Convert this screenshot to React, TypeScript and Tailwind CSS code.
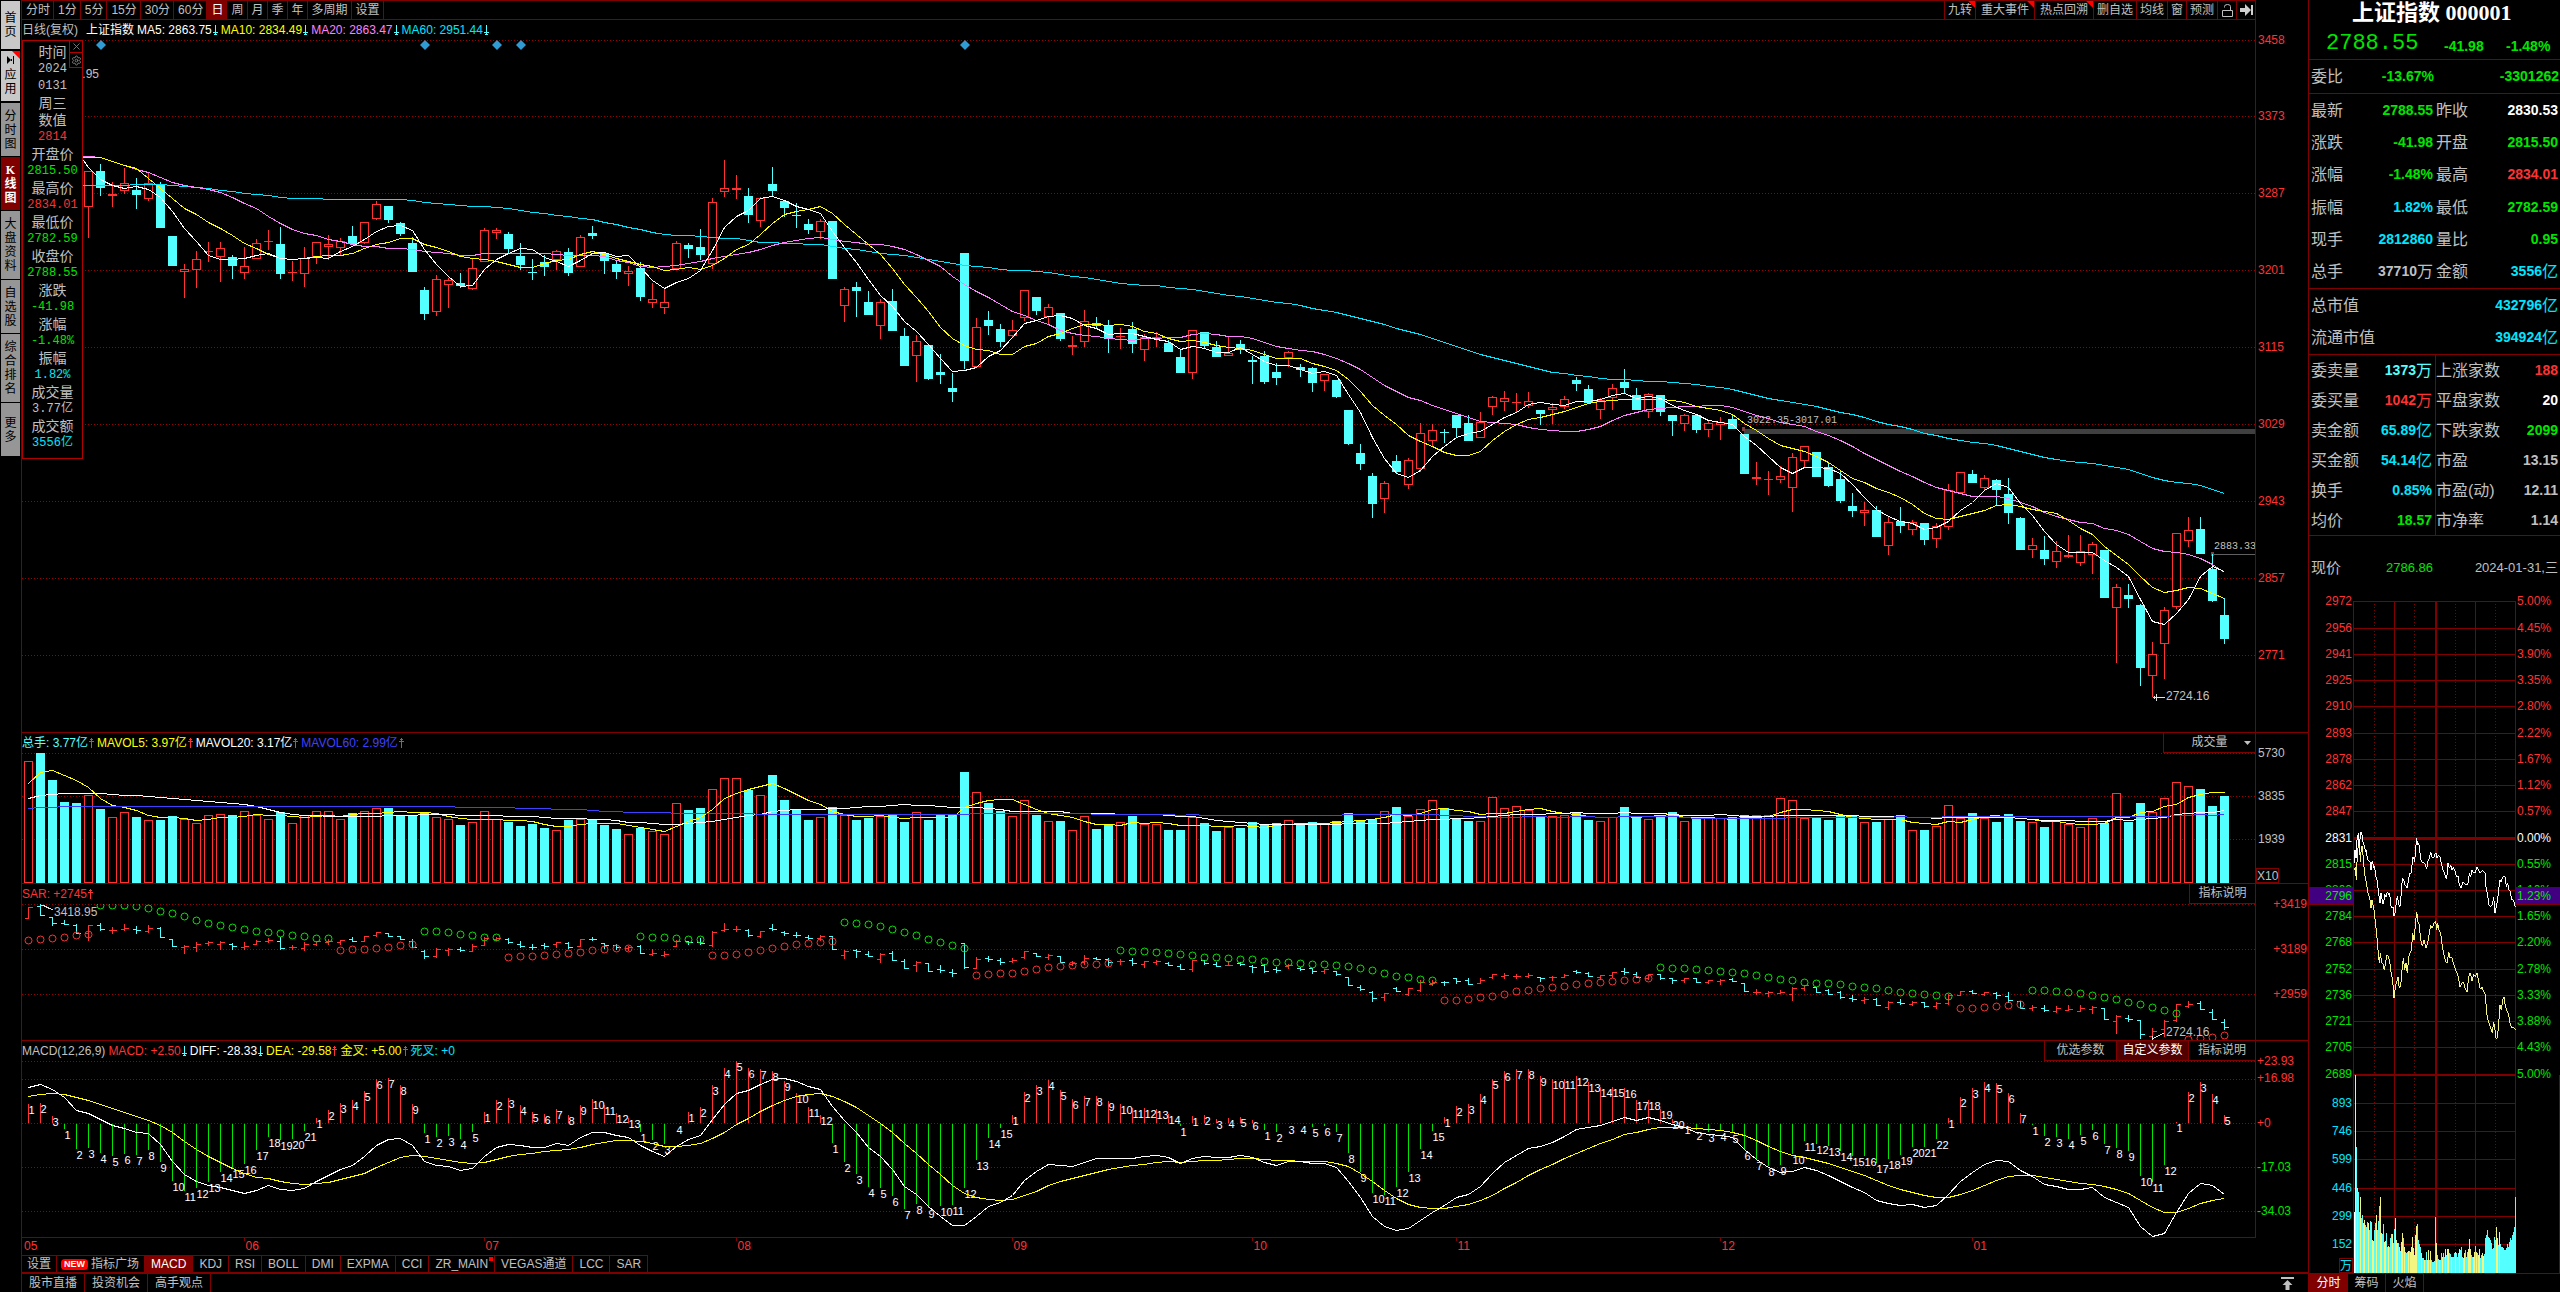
import React from "react";
import { Settings, X } from "lucide-react";

/* ---------- market data ---------- */

type Candle = [up: 0 | 1, high: number, top: number, bottom: number, low: number];

// Daily candles: direction, then high / body top / body bottom / low as screen levels.
const candles: Candle[] = [
  [1, 88, 88, 139, 139], [0, 75, 85, 126, 126], [0, 136, 136, 162, 169], [0, 147, 160, 168, 168], [0, 168, 172, 206, 206],
  [1, 171, 171, 207, 238], [0, 164, 171, 188, 196], [1, 182, 194, 196, 207], [1, 168, 183, 191, 194], [0, 178, 190, 195, 209],
  [1, 172, 183, 199, 201], [0, 182, 184, 228, 228], [0, 236, 236, 266, 266], [1, 264, 269, 272, 298], [1, 251, 259, 270, 288],
  [1, 242, 251, 252, 262], [1, 242, 248, 257, 282], [0, 255, 257, 266, 279], [1, 247, 266, 273, 279], [1, 239, 243, 259, 259],
  [1, 230, 241, 242, 250], [0, 227, 244, 274, 279], [1, 261, 272, 273, 281], [1, 247, 258, 274, 287], [1, 242, 242, 257, 264],
  [1, 235, 244, 247, 260], [1, 238, 241, 248, 256], [0, 226, 236, 244, 244], [1, 222, 222, 243, 244], [1, 201, 204, 219, 220],
  [0, 206, 206, 220, 223], [0, 222, 223, 234, 236], [0, 237, 243, 272, 272], [0, 287, 290, 314, 320], [1, 275, 279, 312, 316],
  [1, 278, 280, 285, 308], [0, 273, 283, 286, 288], [1, 258, 268, 289, 290], [1, 228, 230, 262, 262], [1, 228, 230, 233, 239],
  [0, 232, 234, 249, 253], [0, 243, 256, 265, 270], [0, 259, 272, 273, 280], [0, 255, 262, 267, 276], [1, 250, 251, 260, 270],
  [0, 248, 252, 273, 276], [1, 235, 237, 267, 267], [0, 226, 233, 236, 239], [0, 252, 253, 261, 274], [0, 260, 264, 272, 279],
  [1, 266, 271, 274, 286], [0, 262, 268, 297, 301], [1, 283, 299, 303, 308], [1, 288, 302, 308, 314], [1, 241, 243, 269, 269],
  [0, 243, 245, 249, 258], [0, 229, 247, 255, 260], [1, 198, 202, 264, 269], [1, 160, 188, 192, 197], [1, 175, 188, 190, 199],
  [0, 188, 196, 215, 223], [1, 197, 198, 221, 227], [0, 167, 184, 191, 196], [0, 200, 201, 208, 217], [0, 203, 215, 216, 228],
  [0, 219, 224, 230, 234], [1, 219, 221, 232, 239], [0, 221, 221, 279, 279], [1, 287, 289, 306, 322], [0, 282, 287, 291, 317],
  [0, 291, 302, 315, 315], [1, 299, 302, 326, 339], [0, 289, 301, 331, 331], [0, 328, 336, 366, 366], [1, 335, 341, 356, 382],
  [0, 345, 345, 379, 380], [0, 354, 372, 375, 384], [0, 373, 388, 392, 402], [0, 253, 253, 361, 369], [1, 318, 327, 367, 367],
  [0, 311, 320, 326, 335], [0, 324, 329, 342, 347], [1, 320, 330, 336, 338], [1, 290, 290, 318, 321], [0, 297, 297, 311, 315],
  [1, 304, 307, 317, 325], [0, 313, 313, 339, 341], [1, 336, 345, 347, 355], [1, 310, 321, 342, 347], [0, 317, 323, 326, 328],
  [0, 320, 325, 339, 353], [1, 328, 336, 337, 349], [0, 322, 329, 344, 353], [1, 334, 337, 350, 361], [1, 332, 337, 338, 347],
  [0, 340, 343, 352, 352], [0, 349, 357, 373, 373], [1, 330, 330, 373, 379], [0, 332, 332, 346, 349], [0, 341, 347, 357, 357],
  [1, 336, 353, 356, 356], [0, 340, 344, 350, 354], [0, 356, 360, 362, 384], [0, 351, 356, 382, 384], [0, 363, 372, 378, 385],
  [1, 351, 352, 358, 367], [0, 364, 367, 370, 377], [0, 367, 368, 383, 392], [1, 374, 374, 381, 391], [0, 380, 380, 397, 398],
  [0, 410, 410, 444, 445], [0, 444, 453, 464, 470], [0, 473, 476, 504, 518], [1, 481, 483, 499, 513], [0, 455, 461, 472, 474],
  [1, 458, 460, 485, 489], [1, 423, 433, 469, 472], [1, 424, 430, 441, 446], [0, 429, 432, 433, 443], [0, 415, 415, 428, 438],
  [0, 415, 423, 441, 441], [1, 412, 422, 438, 438], [1, 396, 397, 407, 415], [1, 391, 398, 402, 411], [1, 393, 402, 403, 412],
  [1, 392, 401, 406, 408], [0, 410, 410, 414, 425], [1, 403, 407, 410, 424], [1, 396, 399, 407, 409], [0, 377, 380, 384, 391],
  [0, 385, 389, 403, 403], [1, 398, 400, 410, 419], [1, 384, 388, 398, 410], [0, 369, 382, 388, 393], [0, 388, 395, 410, 410],
  [1, 393, 394, 412, 418], [0, 395, 395, 412, 416], [0, 415, 415, 421, 436], [1, 414, 415, 424, 431], [0, 415, 415, 430, 433],
  [1, 420, 423, 430, 437], [1, 417, 422, 425, 440], [0, 415, 419, 429, 429], [0, 434, 434, 474, 474], [1, 462, 477, 479, 485],
  [1, 471, 479, 480, 495], [1, 466, 476, 480, 483], [1, 453, 457, 488, 512], [1, 446, 446, 461, 468], [0, 452, 452, 477, 477],
  [0, 462, 467, 486, 487], [0, 471, 479, 501, 503], [0, 493, 506, 511, 517], [1, 502, 510, 513, 526], [0, 506, 510, 537, 537],
  [1, 517, 522, 546, 555], [0, 507, 521, 526, 533], [1, 520, 522, 530, 535], [0, 523, 523, 540, 545], [1, 523, 526, 539, 548],
  [1, 484, 490, 527, 530], [1, 472, 472, 493, 493], [0, 470, 474, 483, 483], [1, 475, 478, 488, 491], [0, 479, 480, 490, 505],
  [0, 478, 494, 513, 524], [0, 517, 518, 550, 550], [1, 538, 545, 550, 558], [0, 536, 550, 559, 565], [1, 541, 551, 562, 568],
  [1, 535, 555, 557, 558], [1, 535, 551, 563, 566], [1, 542, 544, 555, 574], [0, 550, 550, 598, 598], [1, 584, 587, 608, 663],
  [0, 584, 595, 599, 608], [0, 604, 605, 668, 686], [1, 642, 654, 676, 697], [1, 607, 610, 644, 679], [1, 533, 533, 607, 609],
  [1, 517, 530, 541, 547], [0, 517, 529, 554, 554], [0, 554, 569, 601, 602], [0, 598, 615, 639, 644],
];

const volumes = [
  87, 64, 140, 201, 204, 180, 220, 244, 230, 243, 252, 251, 240, 248, 260, 238, 233, 237, 227, 238, 249, 229, 260, 238, 227, 227, 247, 232,
  227, 219, 217, 237, 237, 229, 244, 249, 265, 258, 227, 249, 257, 268, 262, 273, 280, 251, 249, 250, 265, 276, 289, 273, 283, 289, 205, 223,
  218, 166, 135, 135, 167, 182, 126, 195, 223, 251, 244, 215, 237, 251, 246, 240, 238, 257, 230, 251, 238, 238, 117, 174, 204, 226, 241, 194,
  237, 255, 254, 280, 241, 276, 264, 258, 240, 261, 263, 279, 279, 244, 259, 282, 272, 273, 257, 265, 259, 252, 265, 257, 261, 254, 232, 251,
  249, 227, 215, 240, 221, 196, 219, 246, 254, 255, 188, 219, 213, 222, 241, 240, 238, 229, 251, 255, 244, 215, 242, 249, 238, 229, 255, 247,
  246, 246, 243, 237, 238, 238, 191, 196, 245, 245, 251, 238, 240, 258, 257, 248, 238, 280, 279, 269, 210, 246, 232, 245, 257, 234, 254, 258,
  271, 254, 263, 272, 245, 259, 177, 257, 204, 230, 191, 146, 157, 165, 212, 184,
];

const macdBars = [
  53, 56, 20, -16, -72, -68, -83, -93, -85, -89, -74, -108, -160, -188, -182, -163, -135, -125, -113, -74, -38, -46, -44, -22, 14, 37, 56, 65,
  90, 122, 126, 107, 53, -27, -38, -36, -43, -25, 31, 66, 70, 51, 31, 26, 40, 23, 51, 67, 51, 28, 15, -24, -46, -58, -2, 31, 45, 107, 154, 173,
  154, 150, 145, 119, 84, 45, 23, -55, -107, -141, -177, -180, -202, -239, -225, -236, -230, -228, -180, -102, -40, -13, 23, 87, 107, 120, 93,
  67, 76, 76, 61, 53, 42, 41, 39, 25, -7, 19, 23, 13, 14, 17, 8, -18, -26, -2, -2, -11, -9, -26, -83, -135, -195, -200, -177, -135, -71, -21,
  17, 48, 53, 80, 122, 146, 151, 150, 132, 124, 123, 132, 115, 102, 101, 97, 66, 65, 39, 13, -2, -20, -24, -23, -28, -75, -103, -120, -117,
  -87, -51, -57, -65, -79, -91, -91, -110, -99, -88, -67, -66, -44, 14, 74, 99, 116, 112, 84, 28, -4, -36, -39, -43, -34, -18, -59, -68, -77,
  -147, -163, -117, 3, 87, 115, 80, 23,
];

// Parabolic SAR runs: trend flag followed by the levels of consecutive days.
const sarRuns: [0 | 1, number[]][] = [
  [1, [586, 583, 581, 578, 573, 569]],
  [0, [488, 488, 489, 491, 496, 505, 511, 519, 530, 538, 544, 549, 554, 560, 564, 566, 572, 575, 580, 580]],
  [1, [614, 611, 611, 608, 605, 600, 597]],
  [0, [561, 561, 563, 570, 572, 577, 577]],
  [1, [632, 630, 630, 627, 624, 622, 619, 613, 611, 608, 608]],
  [0, [575, 577, 577, 580, 583, 583]],
  [1, [628, 628, 625, 619, 614, 608, 603, 597, 594, 591, 588]],
  [0, [535, 538, 541, 547, 555, 563, 572, 583, 591, 600, 608]],
  [1, [683, 680, 677, 677, 672, 666, 661, 658, 656, 653, 653, 650]],
  [0, [613, 616, 616, 619, 622, 625, 628, 633, 633, 636, 638, 638, 644, 647, 647, 650, 652, 652, 656, 658, 663, 669, 678, 686, 689, 694, 697]],
  [1, [753, 753, 750, 745, 742, 736, 728, 725, 720, 717, 714, 709, 706, 703, 700, 697, 695, 691]],
  [0, [661, 663, 663, 666, 669, 672, 675, 678, 683, 689, 694, 697, 703, 706, 706, 709, 714, 716, 720, 725, 731, 734, 737, 739, 742]],
  [1, [775, 775, 772, 770, 767, 765]],
  [0, [725, 725, 728, 731, 733, 739, 745, 750, 759, 765, 773, 781, 790]],
  [1, [862, 860, 856, 851]],
];

const RED = "#ff3232";
const CYAN = "#54ffff";
const GREEN = "#00e600";
const GRID = "#9a0000";
const FRAME = "#800000";

/* ---------- chart geometry ---------- */

const dayX = (i: number) => 6.5 + 12 * i;
const level = (v: number) => v * 0.3584;
const priceY = (p: number) => p - 40;
const volumeY = (v: number) => Math.round(level(v) - 23);
const sarY = (v: number) => Math.round(level(v) - 174) + 0.5;
const sarFromPrice = (p: number) => Math.round((p - 75.4) / 4.564) + 0.5;
const macdY = (v: number) => level(v) - 331;

type Knot = [index: number, value: number];

function interpolate(knots: Knot[], i: number) {
  for (let k = 1; k < knots.length; k++) {
    const [x0, y0] = knots[k - 1];
    const [x1, y1] = knots[k];
    if (i <= x1) return y0 + ((y1 - y0) * (i - x0)) / (x1 - x0);
  }
  return knots[knots.length - 1][1];
}

// Moving average; the days before the window fills come from the given knots.
function average(values: number[], span: number, warmup: Knot[]) {
  const from = Math.max(span - 1, warmup[warmup.length - 1][0] + 1);
  return values.map((_, i) =>
    i < from ? interpolate(warmup, i) : values.slice(i - span + 1, i + 1).reduce((a, b) => a + b, 0) / span,
  );
}

const toPoints = (values: number[], y: (v: number) => number) => values.map((v, i) => `${dayX(i)},${Math.round(y(v)) + 0.5}`).join(" ");

const closes = candles.map(([up, , top, bottom]) => (up ? top : bottom));
const ma5 = average(closes, 5, [[0, 100], [3, 150]]);
const ma10 = average(closes, 10, [[0, 150], [5, 157], [6, 157], [7, 161], [8, 165]]);
const ma20 = average(closes, 20, [[0, 150], [5, 156], [6, 157], [9, 169], [10, 172], [12, 182], [13, 185], [15, 189], [16, 192], [17, 197], [18, 203]]);
const ma60 = average(closes, 60, [
  [0, 187], [5, 185], [11, 184], [15, 188], [19, 194], [22, 198], [27, 199], [31, 199], [35, 204], [40, 208], [44, 215], [47, 219], [53, 234], [55, 235], [58, 238],
]);
const vol5 = average(volumes, 5, [[0, 147], [1, 118], [2, 113], [3, 125]]);
const vol20 = average(volumes, 20, [[0, 190], [1, 182], [2, 178], [5, 175], [8, 180], [11, 186], [14, 195], [18, 206]]);
const vol60 = average(volumes, 60, [[0, 218], [2, 214], [5, 211], [17, 211], [20, 213], [24, 211], [33, 213], [38, 214], [45, 220], [50, 229], [58, 232]]);

const deaKnots: Knot[] = [
  [0, 1022], [25, 1260], [37, 1209], [53, 1160], [66, 1014], [81, 1311], [102, 1195], [117, 1335], [137, 1107], [160, 1303], [167, 1243], [179, 1346], [183, 1307],
];
const deaRaw = macdBars.reduce<number[]>((acc, bar, i) => [...acc, i === 0 ? 1022 : acc[i - 1] - bar / 8], []);
const deaDrift = deaKnots.map(([i, v]): Knot => [i, v - deaRaw[i]]);
const dea = deaRaw.map((v, i) => v + interpolate(deaDrift, i));
const diff = dea.map((v, i) => v - macdBars[i] / 2);

const streaks = macdBars.reduce<number[]>((acc, bar, i) => {
  const same = i > 0 && bar > 0 === macdBars[i - 1] > 0;
  return [...acc, same ? acc[i - 1] + 1 : 1];
}, []);

/* ---------- small pieces ---------- */

function GridLines({ ys }: { ys: number[] }) {
  return (
    <g stroke={GRID} strokeDasharray="1 2">
      {ys.map((y) => (
        <line key={y} x1="0" x2="100%" y1={y} y2={y} />
      ))}
    </g>
  );
}

function Line({ values, y, color }: { values: number[]; y: (v: number) => number; color: string }) {
  return <polyline points={toPoints(values, y)} fill="none" stroke={color} />;
}

function AxisText({ x, y, color, end, children }: { x: number; y: number; color: string; end?: boolean; children: string }) {
  return (
    <text x={x} y={y + 4} fill={color} fontSize="12" textAnchor={end ? "end" : "start"}>
      {children}
    </text>
  );
}

function Arrow({ up }: { up?: boolean }) {
  return (
    <svg width="6" height="12" viewBox="0 0 6 12" className="inline-block shrink-0" shapeRendering="crispEdges">
      {up ? (
        <path d="M3.5 11V1M1 4.5h2M4 4.5h2M2 2.5h3" stroke={RED} fill="none" />
      ) : (
        <path d="M3.5 1v10M1 8.5h2M4 8.5h2M2 10.5h3" stroke={CYAN} fill="none" />
      )}
    </svg>
  );
}

function Legend({ color, trend, children }: { color: string; trend?: "up" | "down"; children: React.ReactNode }) {
  return (
    <span className="flex items-center" style={{ color }}>
      {children}
      {trend && <Arrow up={trend === "up"} />}
    </span>
  );
}

function Pane({ header, plot, axis }: { header: React.ReactNode; plot: React.ReactNode; axis: React.ReactNode }) {
  return (
    <section className="flex border-b border-[#800000]">
      <div className="min-w-0 flex-1 border-r border-[#800000]">
        <div className="flex h-5 items-center justify-between">{header}</div>
        {plot}
      </div>
      <div className="w-[52px] shrink-0">{axis}</div>
    </section>
  );
}

/* ---------- panes ---------- */

const priceLevels: [number, string][] = [
  [40, "3458"], [116, "3373"], [193, "3287"], [270, "3201"], [347, "3115"], [424, "3029"], [501, "2943"], [578, "2857"], [655, "2771"],
];

function PriceChart() {
  return (
    <svg className="block h-[692px] w-full" shapeRendering="crispEdges">
      <GridLines ys={priceLevels.map(([y]) => y - 39.5)} />
      <rect x="1722" y="389" width="100%" height="5" fill="#404040" />
      <line x1="2190" x2="100%" y1="514.5" y2="514.5" stroke="#606060" />
      <rect x="1720" y="387" width="3" height="4" fill="#804040" />
      <rect x="2189" y="512" width="3" height="4" fill="#804040" />
      {candles.map(([up, high, top, bottom, low], i) => {
        const x = dayX(i);
        if (!up) {
          return (
            <g key={i} fill={CYAN}>
              <rect x={x - 0.5} y={priceY(high)} width="1" height={low - high} />
              <rect x={x - 4.5} y={priceY(top)} width="9" height={bottom - top} />
            </g>
          );
        }
        return (
          <g key={i}>
            <path d={`M${x} ${priceY(high)}V${priceY(top)}M${x} ${priceY(bottom)}V${priceY(low)}`} stroke={RED} />
            {bottom - top > 2 ? (
              <rect x={x - 4} y={priceY(top) + 0.5} width="8" height={bottom - top - 1} fill="black" stroke={RED} />
            ) : (
              <rect x={x - 4.5} y={priceY(top)} width="9" height={bottom - top} fill={RED} />
            )}
          </g>
        );
      })}
      <Line values={ma60} y={priceY} color="#00e6ff" />
      <Line values={ma20} y={priceY} color="#ff80ff" />
      <Line values={ma10} y={priceY} color="#ffff00" />
      <Line values={ma5} y={priceY} color="#ffffff" />
      <g fill="#2f9bd2" shapeRendering="auto">
        {[79, 403, 475, 499, 943].map((x) => (
          <path key={x} d={`M${x} 0l5 5-5 5-5-5z`} />
        ))}
      </g>
      <g fill="#c0c0c0" fontSize="12">
        <text x="77" y="38" textAnchor="end">3418.95</text>
        <text x="2144" y="660">2724.16</text>
        <g className="font-['Liberation_Mono',monospace]" fontSize="10">
          <text x="1725" y="383">3022.35-3017.01</text>
          <text x="2192" y="509">2883.33</text>
        </g>
      </g>
      <path d="M2131 657.5h12M2132 656v3M2134 654v7" stroke="#e0e0e0" />
    </svg>
  );
}

function PriceAxis() {
  return (
    <svg className="block h-[712px] w-full">
      {priceLevels.map(([y, label]) => (
        <AxisText key={label} x={2} y={y - 20} color={RED}>
          {label}
        </AxisText>
      ))}
    </svg>
  );
}

function VolumeChart() {
  return (
    <svg className="block h-[130px] w-full" shapeRendering="crispEdges">
      <GridLines ys={[0.5, 43.5, 86.5]} />
      {volumes.map((v, i) => {
        const y = volumeY(v);
        return candles[i][0] ? (
          <rect key={i} x={dayX(i) - 4} y={y + 0.5} width="8" height={129 - y} fill="black" stroke={RED} />
        ) : (
          <rect key={i} x={dayX(i) - 4.5} y={y} width="9" height={130 - y} fill={CYAN} />
        );
      })}
      <Line values={vol5} y={volumeY} color="#ffff00" />
      <Line values={vol20} y={volumeY} color="#ffffff" />
      <Line values={vol60} y={volumeY} color="#4040ff" />
    </svg>
  );
}

function SarChart() {
  let day = 0;
  return (
    <svg className="block h-[136px] w-full" shapeRendering="crispEdges">
      <GridLines ys={[0.5, 45.5, 90.5]} />
      {candles.map(([up, high, top, bottom, low], i) => {
        const x = dayX(i);
        const open = sarFromPrice(up ? bottom : top);
        const close = sarFromPrice(up ? top : bottom);
        const y0 = sarFromPrice(high) - 0.5;
        const y1 = sarFromPrice(low) + 0.5;
        return <path key={i} d={`M${x} ${y0}V${y1}M${x - 4} ${open}H${x}M${x} ${close}H${x + 4.5}`} stroke={up ? RED : CYAN} fill="none" />;
      })}
      <g shapeRendering="auto" fill="none">
        {sarRuns.flatMap(([up, levels]) =>
          levels.map((v) => {
            const i = day++;
            return <circle key={i} cx={dayX(i)} cy={sarY(v)} r="3.5" stroke={up ? RED : GREEN} />;
          }),
        )}
      </g>
      <g fill="#c0c0c0" fontSize="12">
        <text x="32" y="12">3418.95</text>
        <text x="2144" y="132">2724.16</text>
      </g>
      <path d="M20 1l11 5M19 1h4M2130 135l12-6M2130 132v4h4" stroke="#e0e0e0" fill="none" />
    </svg>
  );
}

function MacdChart() {
  return (
    <svg className="block h-[176px] w-full" shapeRendering="crispEdges">
      <GridLines ys={[0.5, 18.5, 62.5, 106.5, 150.5]} />
      {macdBars.map((bar, i) => {
        const y = Math.round(macdY(1097 - bar));
        return <line key={i} x1={dayX(i)} x2={dayX(i)} y1={bar > 0 ? 62 : 63} y2={y} stroke={bar > 0 ? RED : GREEN} />;
      })}
      <g fill="#ffffff" fontSize="11">
        {macdBars.map((bar, i) => (
          <text key={i} x={dayX(i)} y={Math.round(macdY(1097 - bar)) + 10}>
            {streaks[i]}
          </text>
        ))}
      </g>
      <Line values={dea} y={macdY} color="#ffff00" />
      <Line values={diff} y={macdY} color="#ffffff" />
    </svg>
  );
}

const months: [number, string][] = [
  [18, "06"], [38, "07"], [59, "08"], [82, "09"], [102, "10"], [119, "11"], [141, "12"], [162, "01"],
];

/* ---------- overlay with the selected day's figures ---------- */

const dayFigures: [string, string][] = [
  ["时间", "#c0c0c0"], ["2024", "#c0c0c0"], ["0131", "#c0c0c0"], ["周三", "#c0c0c0"], ["数值", "#c0c0c0"], ["2814", RED],
  ["开盘价", "#c0c0c0"], ["2815.50", GREEN], ["最高价", "#c0c0c0"], ["2834.01", RED], ["最低价", "#c0c0c0"], ["2782.59", GREEN],
  ["收盘价", "#c0c0c0"], ["2788.55", GREEN], ["涨跌", "#c0c0c0"], ["-41.98", GREEN], ["涨幅", "#c0c0c0"], ["-1.48%", GREEN],
  ["振幅", "#c0c0c0"], ["1.82%", "#00e6ff"], ["成交量", "#c0c0c0"], ["3.77亿", "#c0c0c0"], ["成交额", "#c0c0c0"], ["3556亿", "#00e6ff"],
];

function DayOverlay() {
  return (
    <aside className="absolute left-0 top-5 w-[61px] border border-[#b00000] bg-black pb-[6px] pt-[3px] text-center">
      {dayFigures.map(([text, color], i) => (
        <p
          key={i}
          className={
            /[^\x00-\x7f]$/.test(text) && !/\d/.test(text)
              ? "h-[17px] text-[14px] leading-[17px]"
              : "h-[17px] whitespace-nowrap font-['Liberation_Mono','Noto_Sans_CJK_SC',monospace] text-[12px] leading-[17px]"
          }
          style={{ color }}
        >
          {text}
        </p>
      ))}
      <div className="absolute -right-px -top-px flex w-[14px] flex-col border border-[#b00000] bg-black text-[#808080]">
        <button aria-label="关闭" className="flex h-3 items-center justify-center border-b border-[#b00000]">
          <X size={11} strokeWidth={2} />
        </button>
        <button aria-label="设置" className="flex h-[14px] items-center justify-center">
          <Settings size={11} strokeWidth={2} />
        </button>
      </div>
    </aside>
  );
}

/* ---------- chrome ---------- */

const periods = ["分时", "1分", "5分", "15分", "30分", "60分", "日", "周", "月", "季", "年", "多周期", "设置"];
const tools: [string, boolean][] = [
  ["九转", true], ["重大事件", true], ["热点回溯", true], ["删自选", false], ["均线", false], ["窗", false], ["预测", false],
];

function Toolbar() {
  return (
    <div className="flex">
      <nav className="flex h-5 min-w-0 flex-1 justify-between border-b border-r border-t border-[#800000] text-[#c0c0c0]">
        <div className="flex">
          {periods.map((p) => (
            <button
              key={p}
              className={
                p === "日"
                  ? "border-r border-[#800000] bg-[#800000] pl-1 pr-[3px] text-white"
                  : "border-r border-[#800000] pl-1 pr-[3px]"
              }
            >
              {p}
            </button>
          ))}
        </div>
        <div className="flex">
          {tools.map(([t, flagged]) => (
            <button key={t} className={t.length > 3 ? "relative border-l border-[#800000] px-[5px]" : "relative border-l border-[#800000] px-[3px]"}>
              {t}
              {flagged && (
                <svg className="absolute right-0 top-0" width="7" height="7">
                  <path d="M0 0h7v7z" fill="#ff0000" />
                </svg>
              )}
            </button>
          ))}
          <button aria-label="锁定" className="flex w-[19px] items-center justify-center border-l border-[#800000]">
            <svg width="13" height="15" fill="none" stroke="#c0c0c0" strokeWidth="1">
              <path d="M1.5 7.5h10v6h-10zM9.500 7.500v-4q0-2-3-2t-3 2v1" />
            </svg>
          </button>
          <button aria-label="下一个" className="flex w-[19px] items-center justify-center border-l border-[#800000]">
            <svg width="13" height="12" fill="#d0d0d0">
              <path d="M0 4h5V0l6 6-6 6V8H0zM11 1h2v10h-2z" />
            </svg>
          </button>
        </div>
      </nav>
      <div className="w-[52px] shrink-0" />
    </div>
  );
}

function Sidebar() {
  const light = "relative mb-px flex w-[19px] flex-col items-center justify-center bg-[#c8c8c8] text-black";
  const plain = "flex w-[19px] items-center justify-center bg-[#969696] text-black";
  return (
    <nav className="flex w-[21px] shrink-0 flex-col items-center gap-px pt-px text-center text-[12px] leading-[14px]">
      <button className={`${light} h-[48px]`}>
        <span className="w-3 break-all">首页</span>
      </button>
      <button className={`${light} h-[50px]`}>
        <svg width="9" height="8" className="mb-1">
          <path d="M1 0l4 4-4 4zM5 3h1v2H5zM7 0h1v8H7z" fill="black" />
        </svg>
        <span className="w-3 break-all">应用</span>
        <svg className="absolute right-0 top-0" width="8" height="8">
          <path d="M0 0h8v8z" fill="#ff0000" />
        </svg>
      </button>
      <button className={`${plain} h-[53px]`}>
        <span className="w-3 break-all">分时图</span>
      </button>
      <button className="flex h-[53px] w-[19px] items-center justify-center bg-[#800000] font-bold text-white">
        <span className="w-3 break-all font-['Liberation_Serif','Noto_Sans_CJK_SC',serif]">K线图</span>
      </button>
      <button className={`${plain} h-[68px]`}>
        <span className="w-3 break-all">大盘资料</span>
      </button>
      <button className={`${plain} h-[53px]`}>
        <span className="w-3 break-all">自选股</span>
      </button>
      <button className={`${plain} h-[68px]`}>
        <span className="w-3 break-all">综合排名</span>
      </button>
      <button className={`${plain} h-[53px]`}>
        <span className="w-3 break-all">更多</span>
      </button>
    </nav>
  );
}

const indicatorTabs = ["MACD", "KDJ", "RSI", "BOLL", "DMI", "EXPMA", "CCI", "ZR_MAIN", "VEGAS通道", "LCC", "SAR"];

function IndicatorTabs() {
  const cell = "border-r border-[#800000]";
  return (
    <nav className="flex h-[17px] text-[#c0c0c0]">
      <div className="flex border-t border-[#800000]">
        <button className={`${cell} px-[5px]`}>设置</button>
        <button className="flex items-center gap-[3px] pl-1 pr-[5px]">
          <span className="rounded-sm bg-[#ff0000] px-[3px] text-[9px] font-bold leading-[11px] text-white">NEW</span>
          指标广场
        </button>
        {indicatorTabs.map((t) => (
          <button key={t} className={t === "MACD" ? "bg-[#800000] px-[7px] text-white" : `${cell} relative px-[6px]`}>
            {t}
            {t === "ZR_MAIN" && <span className="absolute right-px top-px size-1 bg-[#ff0000]" />}
          </button>
        ))}
      </div>
    </nav>
  );
}

/* ---------- quote panel ---------- */

type Cell = [label: string, value: string, color: string];

function Quote({ cell: [label, value, color] }: { cell: Cell }) {
  const unit = /[万亿]$/.test(value) ? value.slice(-1) : "";
  const digits = unit ? value.slice(0, -1) : value;
  return (
    <div className="flex flex-1 items-center justify-between">
      <dt className="whitespace-nowrap text-[16px] text-[#c0c0c0]">{label}</dt>
      <dd className="flex items-center text-[14px] font-bold" style={{ color }}>
        {digits}
        {unit && <span className="text-[16px] font-normal">{unit}</span>}
      </dd>
    </div>
  );
}

const GRAY = "#c0c0c0";
const BLUE = "#00e6ff";

const quotes: [Cell, Cell][] = [
  [["最新", "2788.55", GREEN], ["昨收", "2830.53", "#ffffff"]],
  [["涨跌", "-41.98", GREEN], ["开盘", "2815.50", GREEN]],
  [["涨幅", "-1.48%", GREEN], ["最高", "2834.01", RED]],
  [["振幅", "1.82%", BLUE], ["最低", "2782.59", GREEN]],
  [["现手", "2812860", BLUE], ["量比", "0.95", GREEN]],
  [["总手", "37710万", GRAY], ["金额", "3556亿", BLUE]],
];

const breadth: [Cell, Cell][] = [
  [["委卖量", "1373万", CYAN], ["上涨家数", "188", RED]],
  [["委买量", "1042万", RED], ["平盘家数", "20", "#ffffff"]],
  [["卖金额", "65.89亿", BLUE], ["下跌家数", "2099", GREEN]],
  [["买金额", "54.14亿", BLUE], ["市盈", "13.15", GRAY]],
  [["换手", "0.85%", BLUE], ["市盈(动)", "12.11", GRAY]],
  [["均价", "18.57", GREEN], ["市净率", "1.14", GRAY]],
];

function QuoteColumns({ rows, divided, height }: { rows: [Cell, Cell][]; divided?: boolean; height: string }) {
  return (
    <div className={`flex border-b border-[#800000] ${height}`}>
      <dl className={`flex w-[127px] flex-col pl-[2px] pr-[3px] ${divided ? "border-r border-[#800000]" : ""}`}>
        {rows.map(([left]) => (
          <Quote key={left[0]} cell={left} />
        ))}
      </dl>
      <dl className="flex flex-1 flex-col pr-[2px]">
        {rows.map(([, right]) => (
          <Quote key={right[0]} cell={right} />
        ))}
      </dl>
    </div>
  );
}

/* ---------- intraday chart ---------- */

const percentRows: [number, string, string, string][] = [
  [601, "2972", "5.00%", RED], [628, "2956", "4.45%", RED], [654, "2941", "3.90%", RED], [680, "2925", "3.35%", RED],
  [706, "2910", "2.80%", RED], [733, "2893", "2.22%", RED], [759, "2878", "1.67%", RED], [785, "2862", "1.12%", RED],
  [811, "2847", "0.57%", RED], [838, "2831", "0.00%", "#ffffff"], [864, "2815", "0.55%", GREEN], [890, "2800", "1.10%", GREEN],
  [916, "2784", "1.65%", GREEN], [942, "2768", "2.20%", GREEN], [969, "2752", "2.78%", GREEN], [995, "2736", "3.33%", GREEN],
  [1021, "2721", "3.88%", GREEN], [1047, "2705", "4.43%", GREEN], [1074, "2689", "5.00%", GREEN],
];
const turnoverRows: [number, string][] = [
  [1103, "893"], [1131, "746"], [1159, "599"], [1188, "446"], [1216, "299"], [1244, "152"],
];

const indexTrace =
  "193,218 195,180 198,205 201,150 205,130 208,185 211,128 214,126 217,140 220,165 223,165 226,185 229,180 232,205 236,212 240,215 243,240 245,218 248,213 251,235 254,228 257,262 260,262 263,285 267,318 270,340 273,310 275,320 278,342 281,340 284,312 288,322 292,305 296,315 299,308 302,345 306,355 309,352 312,378 315,370 318,345 322,318 325,335 328,352 331,348 334,305 337,265 341,268 345,285 349,290 352,295 356,265 360,250 364,248 368,200 371,205 374,215 377,175 380,145 383,165 386,160 389,178 392,210 396,215 400,218 405,222 410,238 414,212 418,205 422,185 425,200 430,205 434,195 438,188 441,205 445,195 450,202 455,225 460,242 465,255 470,268 474,218 478,235 482,225 486,240 490,232 495,242 500,262 504,258 508,285 514,295 518,275 523,280 528,285 533,285 538,250 542,262 546,240 551,250 556,248 561,232 566,240 571,250 576,242 581,245 585,248 588,290 592,312 597,345 602,350 607,345 611,322 615,368 620,345 625,310 629,270 633,275 637,265 641,258 645,262 649,290 653,278 657,300 661,305 665,330 670,330 676,350";
const breadthTrace =
  "193,240 196,232 199,270 202,190 205,165 208,150 211,215 214,170 217,168 220,210 223,240 226,265 229,275 232,300 236,315 240,330 243,355 246,330 249,345 252,360 256,395 260,430 264,480 268,520 271,490 275,520 279,522 283,540 287,515 291,495 295,500 299,515 303,545 308,570 312,625 316,590 320,575 324,562 328,595 332,590 336,540 340,505 344,540 348,520 352,550 356,500 360,488 364,480 368,430 372,450 376,405 380,365 384,395 388,405 392,450 397,468 402,450 408,475 413,460 418,430 422,405 427,415 432,398 437,393 440,420 443,400 447,420 452,430 457,470 462,495 467,515 472,520 476,485 480,505 485,500 490,520 495,535 500,548 505,560 510,590 515,580 520,575 526,598 531,605 536,560 541,548 546,572 551,552 556,560 561,550 566,575 571,598 576,592 581,605 586,612 590,670 594,690 598,700 602,715 607,728 611,695 615,720 618,745 622,745 626,700 630,645 634,660 638,628 642,622 646,650 650,660 655,670 660,700 665,715 670,712 677,720";

// One turnover bar per pixel column, as levels measured down from the traces' origin.
const turnover = [
  1265, 855, 1070, 1193, 1205, 1265, 1220, 1285, 1275, 1300, 1290, 1305, 1310, 1295, 1300, 1320, 1293, 1297, 1350, 1352, 1320, 1300, 1275, 1320,
  1292, 1248, 1221, 1328, 1332, 1302, 1355, 1353, 1328, 1370, 1368, 1370, 1345, 1333, 1332, 1360, 1317, 1285, 1350, 1360, 1360, 1370, 1382, 1355,
  1330, 1343, 1370, 1385, 1388, 1385, 1382, 1382, 1385, 1372, 1340, 1375, 1395, 1335, 1307, 1302, 1350, 1362, 1370, 1390, 1403, 1405, 1410, 1410,
  1385, 1410, 1380, 1410, 1383, 1410, 1415, 1415, 1412, 1281, 1360, 1395, 1408, 1410, 1410, 1388, 1400, 1390, 1400, 1378, 1395, 1377, 1378, 1390,
  1392, 1400, 1402, 1400, 1388, 1385, 1388, 1402, 1388, 1377, 1380, 1370, 1400, 1405, 1390, 1380, 1400, 1385, 1378, 1347, 1378, 1395, 1400, 1400,
  1385, 1368, 1385, 1388, 1395, 1378, 1403, 1395, 1390, 1398, 1392, 1345, 1335, 1320, 1340, 1345, 1350, 1358, 1378, 1375, 1340, 1350, 1310, 1345,
  1365, 1325, 1362, 1372, 1370, 1375, 1380, 1380, 1375, 1362, 1370, 1355, 1345, 1350, 1335, 1325, 1310, 1222,
];
const risingMinutes = new Set([
  1, 3, 6, 9, 10, 14, 18, 19, 22, 26, 27, 30, 31, 34, 38, 41, 42, 43, 45, 47, 48, 50, 54, 56, 57, 58, 59, 60, 61, 62, 67, 70, 73, 74, 76, 82, 85, 88, 91,
  93, 94, 97, 101, 105, 109, 110, 114, 115, 116, 119, 120, 122, 124, 125, 128, 129, 142, 143, 145,
]);

function IntradayChart() {
  const top = 592;
  const height = 681;
  return (
    <svg className="block h-[681px] w-full" shapeRendering="crispEdges">
      <g stroke={FRAME}>
        {percentRows.map(([y]) => (
          <line key={y} x1="44" x2="207" y1={y - top + 0.5} y2={y - top + 0.5} strokeWidth={y === 838 ? 3 : y === 1074 ? 2 : 1} />
        ))}
        {turnoverRows.map(([y]) => (
          <line key={y} x1="44" x2="207" y1={y - top + 0.5} y2={y - top + 0.5} />
        ))}
        {[44.5, 85.5, 166.5, 206.5].map((x) => (
          <line key={x} x1={x} x2={x} y1="9" y2={height} />
        ))}
        <line x1="127" x2="127" y1="9" y2={height} strokeWidth="2" />
        {[65.5, 105.5, 146.5, 186.5].map((x) => (
          <line key={x} x1={x} x2={x} y1="12" y2={height} strokeDasharray="1 2" />
        ))}
        <line x1="250.5" x2="250.5" y1="483" y2={height} />
      </g>
      <g>
        {turnover.map((v, i) => {
          const y = Math.round(v / 3) + 198;
          const x = i === turnover.length - 1 ? 206 : 45 + i;
          return <rect key={i} x={x} y={y} width="1" height={height - y} fill={risingMinutes.has(i) ? "#f4f480" : i === 0 ? "#ffffff" : CYAN} />;
        })}
      </g>
      <g transform="translate(-19 198) scale(0.33333)" fill="none" strokeWidth="3">
        <polyline points={breadthTrace} stroke="#f4f480" />
        <polyline points={indexTrace} stroke="#ffffff" />
      </g>
      {percentRows.map(([y, price, percent, color]) => (
        <g key={y}>
          <AxisText x={43} y={y - top} color={color} end>
            {price}
          </AxisText>
          <AxisText x={208} y={y - top} color={color}>
            {percent}
          </AxisText>
        </g>
      ))}
      {turnoverRows.map(([y, label]) => (
        <AxisText key={y} x={43} y={y - top} color="#00e6ff" end>
          {label}
        </AxisText>
      ))}
      <rect x="30.5" y="666.5" width="13" height="14" fill="black" stroke={FRAME} />
      <text x="31" y="678" fontSize="12" fill="#00e6ff">
        万
      </text>
      <rect x="0" y="295" width="44" height="17" fill="#400080" />
      <rect x="207" y="295" width="44" height="17" fill="#400080" />
      <path d="M0 312.5h44M207 312.5h44" stroke={FRAME} />
      <AxisText x={43} y={304} color={GREEN} end>
        2796
      </AxisText>
      <AxisText x={208} y={304} color={GREEN}>
        1.23%
      </AxisText>
    </svg>
  );
}

function QuotePanel() {
  return (
    <aside className="flex w-[252px] shrink-0 flex-col border-l border-[#800000]">
      <header className="h-[60px] border-b border-[#800000]">
        <h1 className="h-[26px] whitespace-nowrap pl-[43px] font-['Liberation_Serif','Noto_Sans_CJK_SC',serif] text-[22px] font-bold leading-[26px] text-white">
          上证指数 000001
        </h1>
        <div className="flex h-[34px] items-center pl-[17px]" style={{ color: GREEN }}>
          <span className="w-[118px] font-['Liberation_Mono',monospace] text-[22px]">2788.55</span>
          <span className="w-[62px] pt-[6px] text-[14px] font-bold">-41.98</span>
          <span className="pt-[6px] text-[14px] font-bold">-1.48%</span>
        </div>
      </header>
      <dl className="flex h-[34px] items-center border-b border-[#800000] pl-[2px] pr-px text-[14px] font-bold" style={{ color: GREEN }}>
        <dt className="w-[60px] text-[16px] font-normal text-[#c0c0c0]">委比</dt>
        <dd className="w-[63px] text-right">-13.67%</dd>
        <dd className="flex-1 text-right">-3301262</dd>
      </dl>
      <QuoteColumns rows={quotes} height="h-[195px]" />
      <dl className="flex h-[66px] flex-col border-b border-[#800000] pl-[2px] pr-[2px]">
        <Quote cell={["总市值", "432796亿", BLUE]} />
        <Quote cell={["流通市值", "394924亿", BLUE]} />
      </dl>
      <QuoteColumns rows={breadth} height="h-[181px]" divided />
      <div className="flex h-[56px] items-center justify-between pl-[2px] pr-[2px] pt-[6px] text-[13px] text-[#c0c0c0]">
        <span className="w-[75px] text-[15px]">现价</span>
        <span className="flex-1" style={{ color: GREEN }}>
          2786.86
        </span>
        <span>2024-01-31,三</span>
      </div>
      <IntradayChart />
      <nav className="flex flex-1 border-t border-[#800000] text-[#c0c0c0]">
        <button className="w-[39px] bg-[#800000] text-white">分时</button>
        <button className="w-[38px] border-r border-[#800000]">筹码</button>
        <button className="w-[38px] border-r border-[#800000]">火焰</button>
      </nav>
    </aside>
  );
}

/* ---------- page ---------- */

export default function App() {
  return (
    <div className="flex min-h-screen bg-black font-['Liberation_Sans','Noto_Sans_CJK_SC',sans-serif] text-[12px] leading-[17px]">
      <Sidebar />
      <main className="flex min-w-0 flex-1 flex-col border-l border-[#800000]">
        <Toolbar />
        <div className="relative">
          <Pane
            header={
              <div className="flex items-center gap-[3px] whitespace-nowrap">
                <span className="w-[61px] text-[#c0c0c0]">日线(复权)</span>
                <span className="text-white">上证指数</span>
                <Legend color="#ffffff" trend="down">MA5: 2863.75</Legend>
                <Legend color="#ffff00" trend="down">MA10: 2834.49</Legend>
                <Legend color="#ff80ff" trend="down">MA20: 2863.47</Legend>
                <Legend color="#00e6ff" trend="down">MA60: 2951.44</Legend>
              </div>
            }
            plot={<PriceChart />}
            axis={<PriceAxis />}
          />
          <DayOverlay />
        </div>
        <Pane
          header={
            <>
              <div className="flex gap-[3px] whitespace-nowrap">
                <Legend color={CYAN} trend="up">总手: 3.77亿</Legend>
                <Legend color="#ffff00" trend="up">MAVOL5: 3.97亿</Legend>
                <Legend color="#ffffff" trend="up">MAVOL20: 3.17亿</Legend>
                <Legend color="#4040ff" trend="up">MAVOL60: 2.99亿</Legend>
              </div>
              <label className="relative flex h-5 w-[92px] border-b border-l border-[#800000] text-[#c0c0c0]">
                <select aria-label="副图指标" className="w-full appearance-none bg-black text-center [text-align-last:center]">
                  <option>成交量</option>
                </select>
                <svg className="absolute right-[4px] top-[8px]" width="7" height="4">
                  <path d="M0 0h7l-3.500 4z" fill="#c0c0c0" />
                </svg>
              </label>
            </>
          }
          plot={<VolumeChart />}
          axis={
            <svg className="block h-[150px] w-full">
              <AxisText x={2} y={20} color={GRAY}>5730</AxisText>
              <AxisText x={2} y={63} color={GRAY}>3835</AxisText>
              <AxisText x={2} y={106} color={GRAY}>1939</AxisText>
              <rect x="0.5" y="135.5" width="22" height="14" fill="none" stroke={FRAME} />
              <AxisText x={1} y={143} color={GRAY}>X10</AxisText>
            </svg>
          }
        />
        <Pane
          header={
            <>
              <Legend color={RED} trend="up">SAR: +2745</Legend>
              <button className="h-5 w-[66px] border-b border-l border-[#800000] text-[#c0c0c0]">指标说明</button>
            </>
          }
          plot={<SarChart />}
          axis={
            <svg className="block h-[156px] w-full">
              <AxisText x={51} y={20} color={RED} end>+3419</AxisText>
              <AxisText x={51} y={65} color={RED} end>+3189</AxisText>
              <AxisText x={51} y={110} color={RED} end>+2959</AxisText>
            </svg>
          }
        />
        <section className="flex">
          <div className="min-w-0 flex-1 border-b border-r border-[#800000]">
            <div className="flex h-5 items-center justify-between">
              <div className="flex gap-[3px] whitespace-nowrap">
                <Legend color={GRAY}>MACD(12,26,9)</Legend>
                <Legend color={RED} trend="down">MACD: +2.50</Legend>
                <Legend color="#ffffff" trend="down">DIFF: -28.33</Legend>
                <Legend color="#ffff00" trend="up">DEA: -29.58</Legend>
                <Legend color="#ffff00" trend="up">金叉: +5.00</Legend>
                <Legend color={BLUE}>死叉: +0</Legend>
              </div>
              <div className="flex h-5 border-b border-l border-[#800000] text-[#c0c0c0]">
                <button className="w-[71px]">优选参数</button>
                <button className="w-[73px] border-x border-[#800000] bg-[#500000] text-white">自定义参数</button>
                <button className="w-[66px]">指标说明</button>
              </div>
            </div>
            <MacdChart />
          </div>
          <svg className="block h-[197px] w-[52px] shrink-0">
            <AxisText x={1} y={20} color={RED}>+23.93</AxisText>
            <AxisText x={1} y={37} color={RED}>+16.98</AxisText>
            <AxisText x={1} y={82} color={RED}>+0</AxisText>
            <AxisText x={1} y={126} color={GREEN}>-17.03</AxisText>
            <AxisText x={1} y={170} color={GREEN}>-34.03</AxisText>
          </svg>
        </section>
        <svg className="block h-[17px] w-full" shapeRendering="crispEdges">
          <AxisText x={2} y={8} color={RED}>05</AxisText>
          {months.map(([i, label]) => (
            <g key={label}>
              <line x1={dayX(i)} x2={dayX(i)} y1="0" y2="3" stroke={FRAME} />
              <AxisText x={dayX(i) + 1} y={8} color={RED}>
                {label}
              </AxisText>
            </g>
          ))}
        </svg>
        <IndicatorTabs />
        <nav className="flex flex-1 justify-between border-t-2 border-[#800000] text-[#c0c0c0]">
          <div className="flex">
            {["股市直播", "投资机会", "高手观点"].map((t) => (
              <button key={t} className="border-r border-[#800000] px-[7px]">
                {t}
              </button>
            ))}
          </div>
          <button aria-label="展开" className="mr-[14px] flex items-center">
            <svg width="13" height="13" fill="#c0c0c0">
              <path d="M0 0h13v2H0zM6.500 3l5 5h-3v5h-4V8h-3z" />
            </svg>
          </button>
        </nav>
      </main>
      <QuotePanel />
    </div>
  );
}
